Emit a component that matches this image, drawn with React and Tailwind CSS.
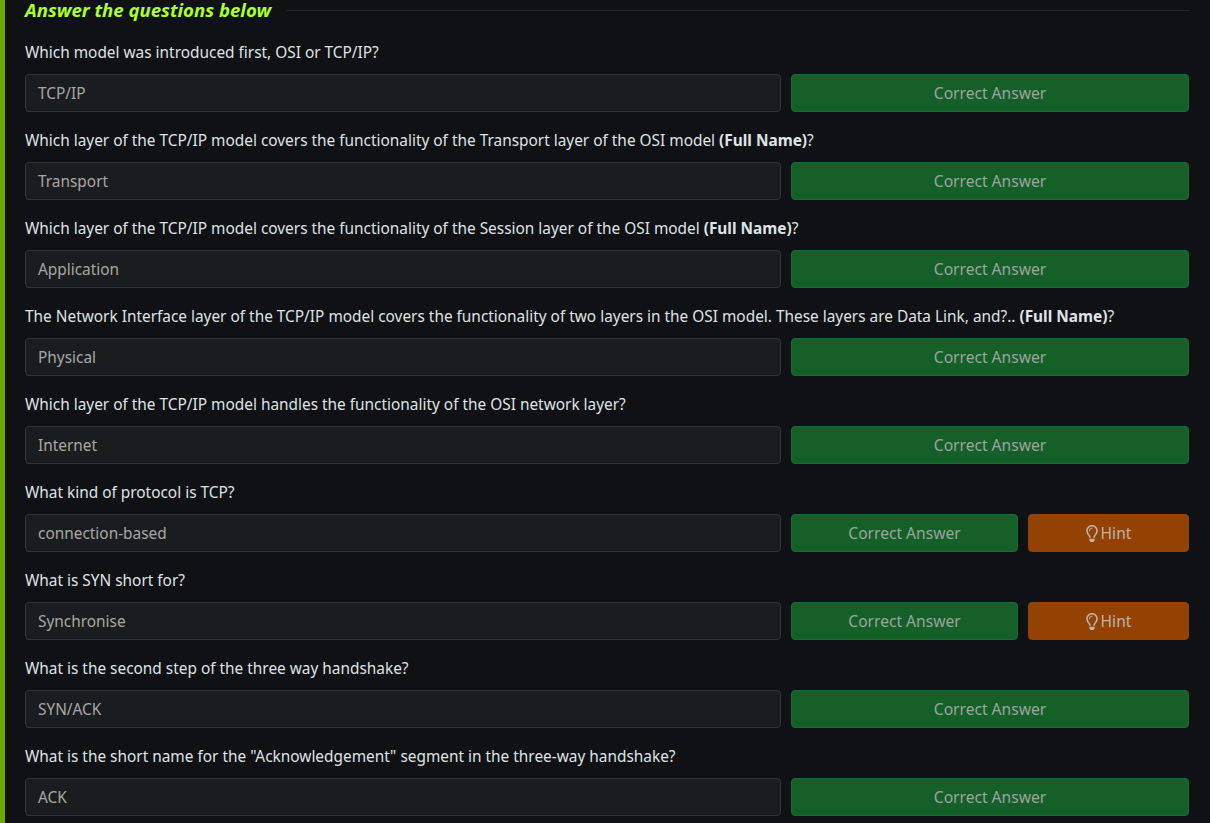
import React from "react";
import { FaRegLightbulb } from "react-icons/fa";

const rows = [
  { q: <>Which model was introduced first, OSI or TCP/IP?</>, a: "TCP/IP" },
  { q: <>Which layer of the TCP/IP model covers the functionality of the Transport layer of the OSI model <b className="font-bold">(Full Name)</b>?</>, a: "Transport" },
  { q: <>Which layer of the TCP/IP model covers the functionality of the Session layer of the OSI model <b className="font-bold">(Full Name)</b>?</>, a: "Application" },
  { q: <>The Network Interface layer of the TCP/IP model covers the functionality of two layers in the OSI model. These layers are Data Link, and?.. <b className="font-bold">(Full Name)</b>?</>, a: "Physical" },
  { q: <>Which layer of the TCP/IP model handles the functionality of the OSI network layer?</>, a: "Internet" },
  { q: <>What kind of protocol is TCP?</>, a: "connection-based", hint: true },
  { q: <>What is SYN short for?</>, a: "Synchronise", hint: true },
  { q: <>What is the second step of the three way handshake?</>, a: "SYN/ACK" },
  { q: <>What is the short name for the "Acknowledgement" segment in the three-way handshake?</>, a: "ACK" },
];

export default function App() {
  return (
    <div className="h-[823px] overflow-hidden bg-[#0f1114] border-l-[5px] border-[#6aa806] pl-5 pr-[21px] font-['Noto_Sans',sans-serif] text-[15.4px]">
      <div className="h-5 flex items-center">
        <span className="text-[18.6px] leading-5 font-bold italic text-[#adff2f] whitespace-nowrap">Answer the questions below</span>
        <div className="flex-1 h-px bg-[#26282b] ml-4" />
      </div>
      <div className="pt-5">
        {rows.map((r, i) => (
          <div key={i} className="mb-4">
            <div className="h-6 pt-px leading-6 mb-[10px] text-[#dfe3e6] whitespace-nowrap">{r.q}</div>
            <div className="flex gap-[10px] h-[38px]">
              <div className="w-[756px] shrink-0 flex items-center px-3 pt-[2px] bg-[#1a1d1f] border border-[#333639] rounded text-[#a8a7a5]">{r.a}</div>
              <div className="flex-1 flex items-center justify-center pt-[2px] bg-[#156029] border border-[#1a6b30] rounded text-[#9ca59c] text-[15.6px]">Correct Answer</div>
              {r.hint && (
                <div className="w-[161px] shrink-0 flex items-center justify-center gap-[3px] pt-[2px] bg-[#934204] border border-[#934204] rounded text-[#bdb3ab] text-[15.6px]">
                  <FaRegLightbulb className="w-[12px] h-[17px] shrink-0 -mt-[2px]" />
                  <span>Hint</span>
                </div>
              )}
            </div>
          </div>
        ))}
      </div>
    </div>
  );
}
